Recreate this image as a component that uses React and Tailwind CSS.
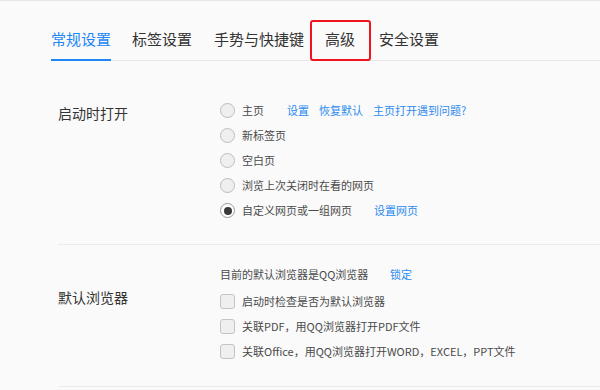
import React from 'react';

const tabs = [
  { label: '常规设置', mr: 'mr-[21px]' },
  { label: '标签设置', mr: 'mr-[22px]' },
  { label: '手势与快捷键', mr: 'mr-[21px]' },
  { label: '高级', mr: 'mr-[24px]' },
  { label: '安全设置', mr: 'mr-[21px]' },
];

function Radio({ checked }) {
  return (
    <span
      className={
        'w-[15px] h-[15px] rounded-full border flex items-center justify-center shrink-0 ' +
        (checked ? 'border-[#9a9a9a] bg-white' : 'border-[#bdbdbd] bg-[#efefef]')
      }
    >
      {checked && <span className="w-[8px] h-[8px] rounded-full bg-[#3a3a3a]" />}
    </span>
  );
}

function Check() {
  return <span className="w-[15px] h-[15px] rounded-[3px] border border-[#c4c4c4] bg-[#efefef] shrink-0" />;
}

export default function App() {
  return (
    <div
      className="w-[600px] h-[390px] overflow-hidden bg-[#fafafa] border-t border-[#e6e6e6] text-[#333]"
      style={{ fontFamily: '"Noto Sans CJK SC", "Noto Sans", sans-serif' }}
    >
      <div className="pl-[51px]">
        {/* Tabs */}
        <div className="flex border-b border-[#e6e6e6] mt-[27px]">
          {tabs.map((t, i) => (
            <div
              key={t.label}
              className={
                'relative text-[15px] leading-[22px] pb-[9px] border-b-2 -mb-px ' +
                t.mr +
                ' ' +
                (i === 0 ? 'text-[#1e86f5] border-[#1e86f5]' : 'text-[#333] border-transparent')
              }
            >
              {t.label}
              {i === 3 && (
                <span className="absolute -left-[15px] -top-[8px] w-[61px] h-[41px] border-2 border-[#f0141e] rounded-[3px]" />
              )}
            </div>
          ))}
        </div>

        {/* 启动时打开 */}
        <div className="ml-[7px] flex pt-[37px] pb-[21px] border-b border-[#ebebeb]">
          <div className="w-[162px] text-[14px] leading-[25px] mt-[3px] text-[#333]">启动时打开</div>
          <div className="flex flex-col text-[11px] text-[#4a4a4a]">
            <div className="flex items-center h-[25px]">
              <Radio />
              <span className="ml-[7px] w-[45px]">主页</span>
              <span className="text-[#2a8af0] mr-[10px]">设置</span>
              <span className="text-[#2a8af0] mr-[10px]">恢复默认</span>
              <span className="text-[#2a8af0]">主页打开遇到问题?</span>
            </div>
            <div className="flex items-center h-[25px]">
              <Radio />
              <span className="ml-[7px]">新标签页</span>
            </div>
            <div className="flex items-center h-[25px]">
              <Radio />
              <span className="ml-[7px]">空白页</span>
            </div>
            <div className="flex items-center h-[25px]">
              <Radio />
              <span className="ml-[7px]">浏览上次关闭时在看的网页</span>
            </div>
            <div className="flex items-center h-[25px]">
              <Radio checked />
              <span className="ml-[7px] w-[132px]">自定义网页或一组网页</span>
              <span className="text-[#2a8af0]">设置网页</span>
            </div>
          </div>
        </div>

        {/* 默认浏览器 */}
        <div className="ml-[7px] flex pt-[18px] pb-[22px] border-b border-[#ebebeb]">
          <div className="w-[162px] text-[14px] leading-[25px] mt-[22px] text-[#333]">默认浏览器</div>
          <div className="flex flex-col text-[11px] text-[#4a4a4a]">
            <div className="flex items-center h-[22px]">
              <span className="w-[170px]">目前的默认浏览器是QQ浏览器</span>
              <span className="text-[#2a8af0]">锁定</span>
            </div>
            <div className="mt-[4px] flex items-center h-[25px]">
              <Check />
              <span className="ml-[7px]">启动时检查是否为默认浏览器</span>
            </div>
            <div className="flex items-center h-[25px]">
              <Check />
              <span className="ml-[7px]">关联PDF，用QQ浏览器打开PDF文件</span>
            </div>
            <div className="flex items-center h-[25px]">
              <Check />
              <span className="ml-[7px]">关联Office，用QQ浏览器打开WORD，EXCEL，PPT文件</span>
            </div>
          </div>
        </div>
      </div>
    </div>
  );
}
